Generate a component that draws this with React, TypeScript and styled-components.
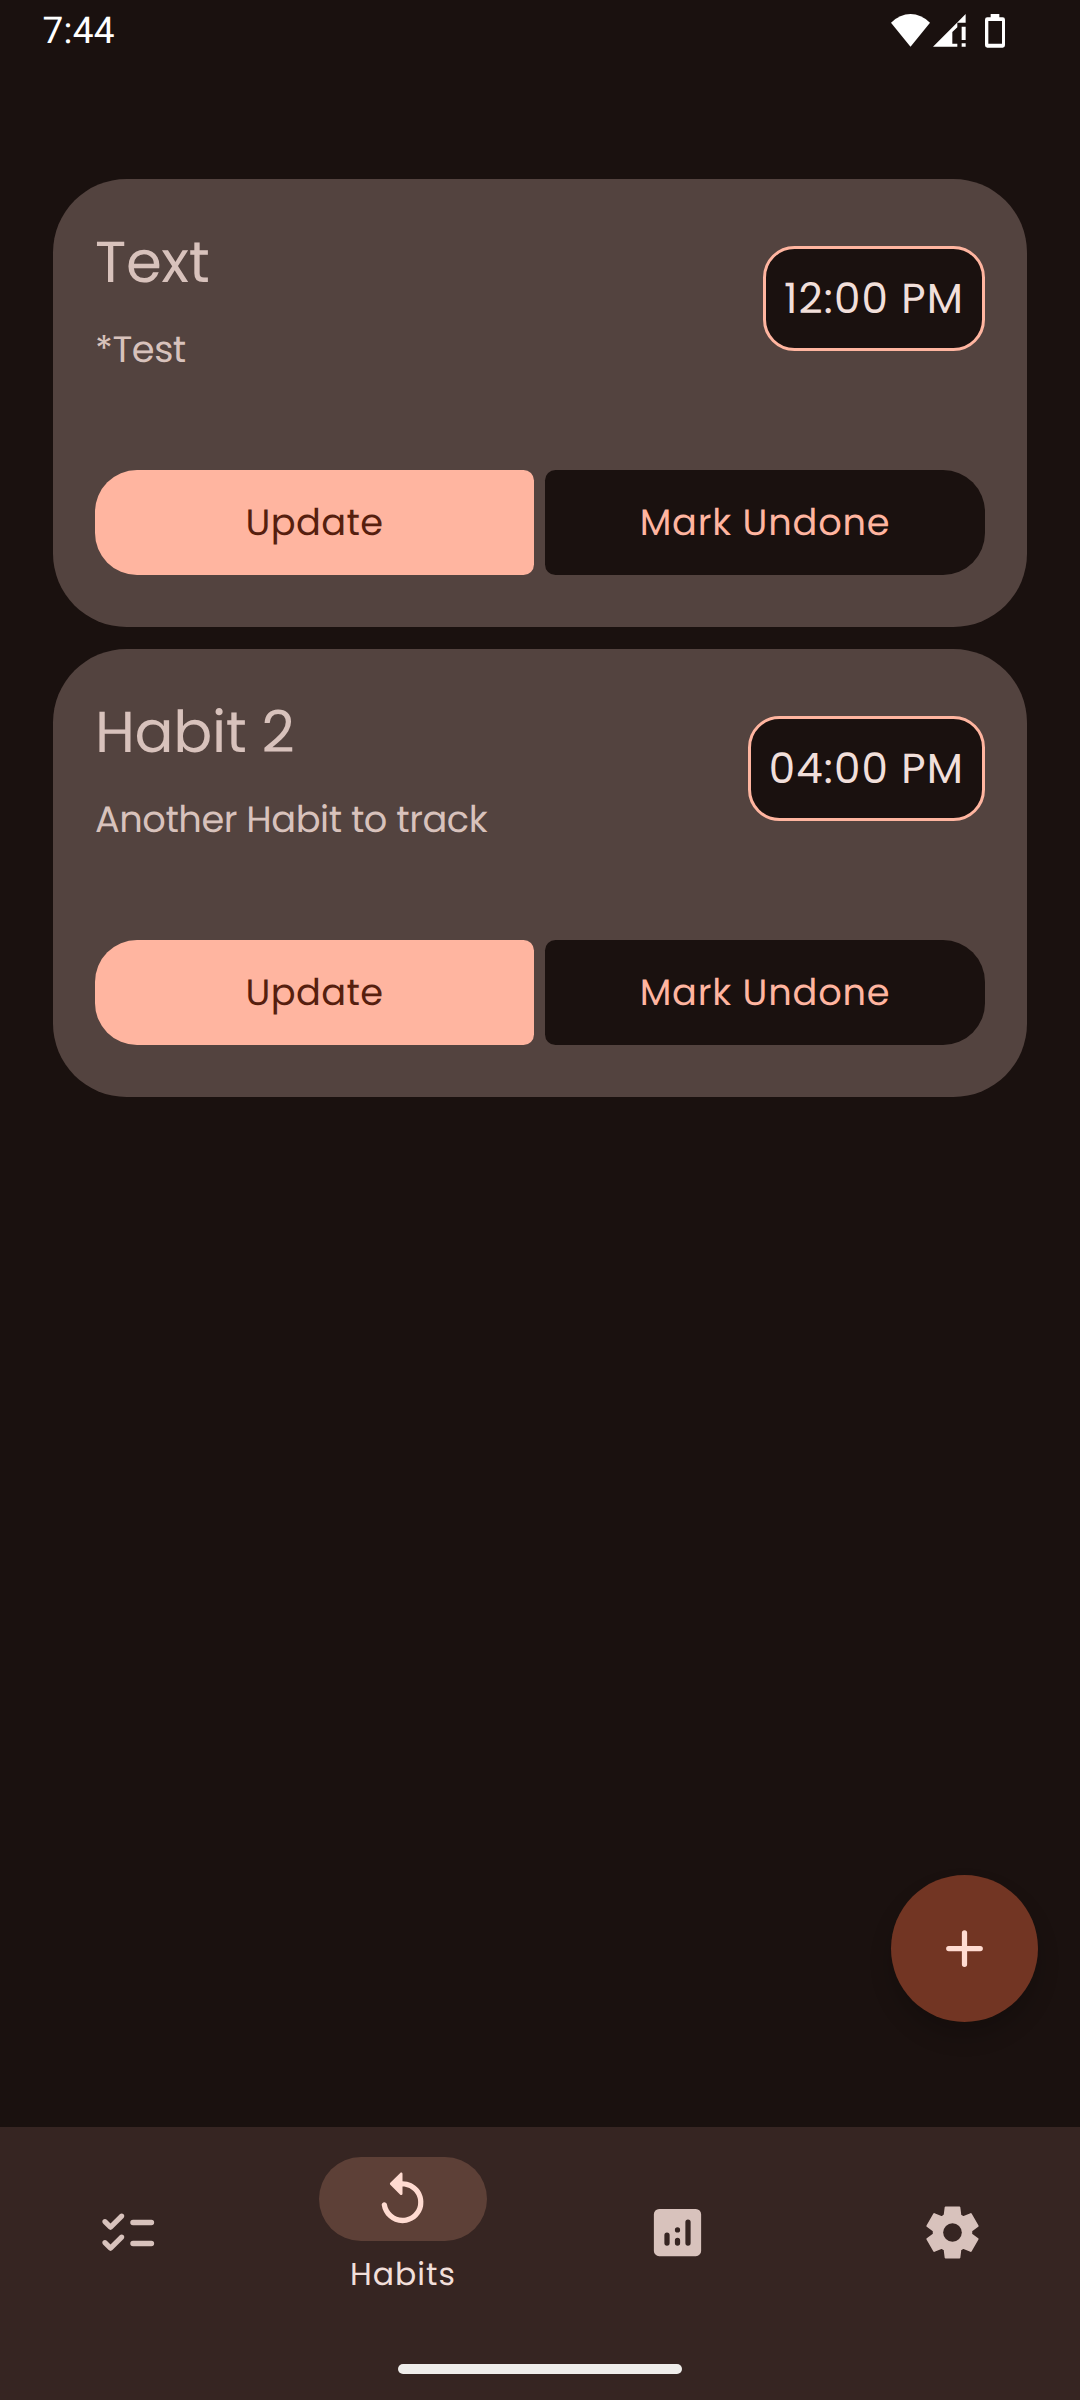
import React from 'react';
import styled, { createGlobalStyle } from 'styled-components';

const color = {
  surface: '#1a110f',
  card: '#53433f',
  onCard: '#d8c2bc',
  primary: '#ffb5a0',
  onPrimary: '#561f0f',
  onSurface: '#f1dfda',
  fab: '#723523',
  onFab: '#ffdbd1',
  nav: '#362522',
  indicator: '#5d4037',
};

const GlobalStyle = createGlobalStyle`
  *, *::before, *::after { box-sizing: border-box; }
  body {
    margin: 0;
    background: ${color.surface};
    font-family: Poppins, Inter, 'Open Sans', sans-serif;
    text-rendering: geometricPrecision;
  }
`;

const Screen = styled.div`
  position: relative;
  display: flex;
  flex-direction: column;
  width: 1080px;
  height: 2400px;
  overflow: hidden;
  background: ${color.surface};
`;

const StatusBar = styled.header`
  display: flex;
  justify-content: space-between;
  height: 62px;
  padding: 0 75px 0 42.5px;
  color: #fff;
`;

const Clock = styled.span`
  font: 400 37px/64px Roboto, sans-serif;
  letter-spacing: 0.2px;
`;

const StatusIcons = styled.div`
  display: flex;
  align-items: flex-start;
  padding-top: 14px;

  svg { display: block; }
  svg + svg { margin-left: 3.33px; }
  svg:last-child { margin-left: 19px; }
`;

const HabitList = styled.main`
  flex: 1;
  display: flex;
  flex-direction: column;
  gap: 22px;
  padding: 117px 53px 0;
`;

const Card = styled.article`
  display: flex;
  flex-direction: column;
  height: 448px;
  padding: 54px 42px 52px;
  border-radius: 73.5px;
  background: ${color.card};
  color: ${color.onCard};
`;

const CardHead = styled.div`
  flex: 1;
  display: flex;
  justify-content: space-between;
  align-items: flex-start;
`;

const CardText = styled.div`
  display: flex;
  flex-direction: column;
  gap: 34px;
`;

const Title = styled.h2`
  margin: 0;
  font-size: 57.75px;
  font-weight: 400;
  line-height: 60px;
  letter-spacing: -0.35px;
`;

const Description = styled.p`
  margin: 0;
  font-size: 36.75px;
  line-height: 44px;
  letter-spacing: -0.46px;
`;

const TimeChip = styled.time`
  display: flex;
  align-items: center;
  height: 105px;
  margin-top: 13px;
  padding: 0 18px;
  border: 3px solid ${color.primary};
  border-radius: 31.5px;
  background: ${color.surface};
  color: ${color.onSurface};
  font-size: 42px;
  letter-spacing: 1.125px;
  white-space: nowrap;
`;

const ButtonRow = styled.div`
  display: grid;
  grid-template-columns: 439px 440px;
  gap: 11px;
`;

const CardButton = styled.button<{ $filled?: boolean }>`
  height: 105px;
  padding: 0 0 2px;
  border: 0;
  border-radius: ${p => (p.$filled ? '42px 10.5px 10.5px 42px' : '10.5px 42px 42px 10.5px')};
  background: ${p => (p.$filled ? color.primary : color.surface)};
  color: ${p => (p.$filled ? color.onPrimary : color.primary)};
  font-family: inherit;
  font-size: 36.75px;
  letter-spacing: ${p => (p.$filled ? '0.4px' : '0.8px')};
  text-rendering: inherit;
`;

const Fab = styled.button`
  position: absolute;
  right: 42px;
  bottom: 378px;
  display: flex;
  align-items: center;
  justify-content: center;
  width: 147px;
  height: 147px;
  padding: 0;
  border: 0;
  border-radius: 50%;
  background: ${color.fab};
  color: ${color.onFab};
  box-shadow: 0 14px 22px rgba(0, 0, 0, 0.18);
`;

const NavBar = styled.nav`
  display: flex;
  flex-direction: column;
  justify-content: space-between;
  align-items: center;
  height: 273px;
  padding-bottom: 26px;
  background: ${color.nav};
`;

const NavItems = styled.div`
  display: grid;
  grid-template-columns: repeat(4, 1fr);
  gap: 21px;
  width: 100%;
  height: 210px;
`;

const NavItem = styled.a<{ $active?: boolean }>`
  display: flex;
  flex-direction: column;
  align-items: center;
  justify-content: center;
  gap: 13px;
  padding: ${p => (p.$active ? '0 0 11px 1.2px' : '0')};
  color: ${color.onCard};
`;

const Indicator = styled.span`
  display: flex;
  align-items: center;
  justify-content: center;
  width: 168px;
  height: 84px;
  border-radius: 42px;
  background: ${color.indicator};
  color: ${color.onFab};
`;

const NavLabel = styled.span`
  color: ${color.onSurface};
  font-size: 31.5px;
  line-height: 42px;
  letter-spacing: 1px;
`;

const GestureHandle = styled.div`
  width: 284px;
  height: 10px;
  border-radius: 5px;
  background: #efedeb;
`;

const Icon = ({ children }: { children: React.ReactNode }) => (
  <svg width="63" height="63" viewBox="0 0 24 24" fill="currentColor">{children}</svg>
);

const tick =
  'M5.54 11c-.26 0-.51-.1-.71-.29L2.7 8.58c-.39-.39-.39-1.02 0-1.41s1.02-.39 1.41 0l1.42 1.42 3.54-3.54c.39-.39 1.02-.39 1.41 0s.39 1.02 0 1.41l-4.24 4.24c-.19.2-.44.3-.7.3z';

const ChecklistIcon = () => (
  <Icon>
    <path d={tick} />
    <path d={tick} transform="translate(0 8)" />
    <path d="M14.1 8.15h7M14.1 16.15h7" stroke="currentColor" strokeWidth="2.1" strokeLinecap="round" />
  </Icon>
);

const ReplayIcon = () => (
  <Icon>
    <path d="M12 5V2.21c0-.45-.54-.67-.85-.35l-3.8 3.79c-.2.2-.2.51 0 .71l3.79 3.79c.32.31.86.09.86-.36V7c3.73 0 6.68 3.42 5.86 7.29-.47 2.27-2.31 4.1-4.57 4.57-3.57.75-6.75-1.7-7.23-5.01-.07-.48-.49-.85-.98-.85-.6 0-1.08.53-1 1.13.62 4.39 4.8 7.64 9.53 6.72 3.12-.61 5.63-3.12 6.24-6.24C20.84 9.48 16.94 5 12 5z" />
  </Icon>
);

const AnalyticsIcon = () => (
  <Icon>
    <path
      fillRule="evenodd"
      d="M5 3h14a2 2 0 0 1 2 2v14a2 2 0 0 1-2 2H5a2 2 0 0 1-2-2V5a2 2 0 0 1 2-2zM8 12a1 1 0 0 0-1 1v3a1 1 0 0 0 2 0v-3a1 1 0 0 0-1-1zM12 10a1 1 0 1 0 0 2a1 1 0 1 0 0-2zM12 14a1 1 0 0 0-1 1v1a1 1 0 0 0 2 0v-1a1 1 0 0 0-1-1zM16 7a1 1 0 0 0-1 1v8a1 1 0 0 0 2 0V8a1 1 0 0 0-1-1z"
    />
  </Icon>
);

const SettingsIcon = () => (
  <Icon>
    <g transform="scale(.025) translate(0 960) translate(480 -480) scale(.955) translate(-480 480)">
      <path
        d="m370-80-16-128q-13-5-24.5-12T307-235l-119 50L78-375l103-78q-1-7-1-13.5v-27q0-6.5 1-13.5L78-585l110-190 119 50q11-8 23-15t24-12l16-128h220l16 128q13 5 24.5 12t22.5 15l119-50 110 190-103 78q1 7 1 13.5v27q0 6.5-2 13.5l103 78-110 190-118-50q-11 8-23 15t-24 12L590-80H370Z"
        stroke="currentColor"
        strokeWidth="30"
        strokeLinejoin="round"
      />
    </g>
    <circle cx="12" cy="12" r="3.55" fill={color.nav} />
  </Icon>
);

const habits = [
  { title: 'Text', description: '*Test', time: '12:00 PM' },
  { title: 'Habit 2', description: 'Another Habit to track', time: '04:00 PM' },
];

export default function App() {
  return (
    <>
      <GlobalStyle />
      <Screen>
        <StatusBar>
          <Clock>7:44</Clock>
          <StatusIcons>
            <svg width="39" height="32.67" viewBox="93 42 117 98" fill="currentColor">
              <path d="M93 68Q120 42 151.500 42Q183 42 210 68L151.500 140Z" />
            </svg>
            <svg width="32.67" height="32.67" viewBox="220 42 98 98" fill="currentColor">
              <path d="M220 140L292 68H293V82L278 96V131H293V140ZM318 42V68H292ZM306 80h12v40h-12zM306 130h12v10h-12z" />
            </svg>
            <svg width="20" height="33.67" viewBox="375 42 60 101" fill="currentColor">
              <path fillRule="evenodd" d="M392 42h26v10h10q7 0 7 7v77q0 7-7 7h-46q-7 0-7-7V59q0-7 7-7h10zM385 63v68h41V63z" />
            </svg>
          </StatusIcons>
        </StatusBar>

        <HabitList>
          {habits.map(habit => (
            <Card key={habit.title}>
              <CardHead>
                <CardText>
                  <Title>{habit.title}</Title>
                  <Description>{habit.description}</Description>
                </CardText>
                <TimeChip>{habit.time}</TimeChip>
              </CardHead>
              <ButtonRow>
                <CardButton $filled>Update</CardButton>
                <CardButton>Mark Undone</CardButton>
              </ButtonRow>
            </Card>
          ))}
        </HabitList>

        <NavBar>
          <NavItems>
            <NavItem><ChecklistIcon /></NavItem>
            <NavItem $active>
              <Indicator><ReplayIcon /></Indicator>
              <NavLabel>Habits</NavLabel>
            </NavItem>
            <NavItem><AnalyticsIcon /></NavItem>
            <NavItem><SettingsIcon /></NavItem>
          </NavItems>
          <GestureHandle />
        </NavBar>

        <Fab aria-label="Add habit">
          <Icon>
            <path d="M12 6v12M6 12h12" stroke="currentColor" strokeWidth="2" strokeLinecap="round" />
          </Icon>
        </Fab>
      </Screen>
    </>
  );
}
